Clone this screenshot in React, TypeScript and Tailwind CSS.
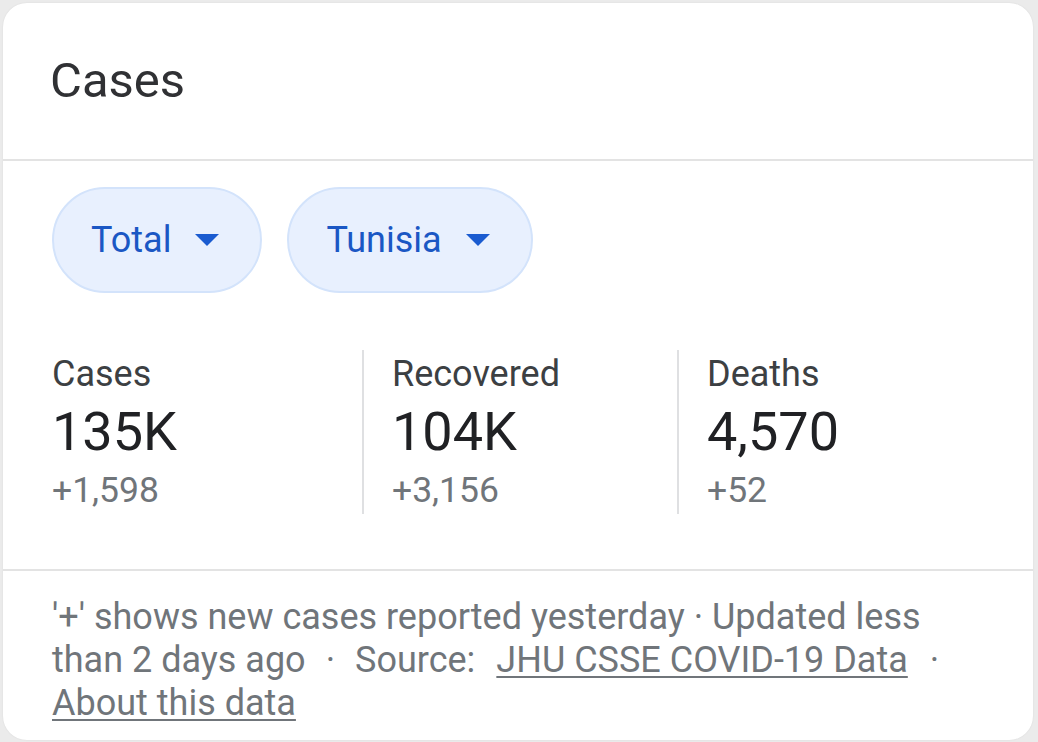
import React from "react";

function Arrow() {
  return (
    <svg width="24" height="12" viewBox="0 0 24 12" className="shrink-0">
      <path d="M0 0H24L12 12Z" fill="#1a5bd0" />
    </svg>
  );
}

function Chip({ label }: { label: string }) {
  return (
    <div className="flex h-[106px] items-center gap-[24px] rounded-full border-2 border-[#d3e3fb] bg-[#e8f0fe] pl-[37px] pr-[41px]">
      <span className="text-[36px] leading-[42px] text-[#1a57c4]">{label}</span>
      <Arrow />
    </div>
  );
}

function Stat({
  label,
  value,
  delta,
  first,
}: {
  label: string;
  value: string;
  delta: string;
  first?: boolean;
}) {
  return (
    <div className={first ? "flex flex-col" : "flex flex-col border-l-2 border-[#dfe0e2] pl-[28px]"}>
      <div className="text-[36px] leading-[48px] text-[#3c4043]">{label}</div>
      <div className="text-[54px] leading-[68px] text-[#202124]">{value}</div>
      <div className="text-[35.5px] leading-[48px] text-[#70757a]">{delta}</div>
    </div>
  );
}

export default function App() {
  return (
    <div
      className="h-[742px] w-[1038px] bg-[#ebebeb] pb-[2px] pl-[3px] pr-[5px] pt-[3px]"
      style={{ fontFamily: "Roboto, 'Liberation Sans', sans-serif" }}
    >
      <div className="flex h-full flex-col overflow-hidden rounded-[24px] bg-white shadow-[0_0_2px_rgba(0,0,0,0.08)]">
        <div className="border-b-2 border-[#e3e3e3] px-[47px] py-[49px]">
          <h1 className="text-[49px] leading-[58px] text-[#303134]">Cases</h1>
        </div>
        <div className="border-b-2 border-[#e3e3e3] px-[49px] pb-[55px] pt-[26px]">
          <div className="flex gap-[25px]">
            <Chip label="Total" />
            <Chip label="Tunisia" />
          </div>
          <div className="mt-[57px] grid grid-cols-[310px_315px_1fr]">
            <Stat label="Cases" value="135K" delta="+1,598" first />
            <Stat label="Recovered" value="104K" delta="+3,156" />
            <Stat label="Deaths" value="4,570" delta="+52" />
          </div>
        </div>
        <div className="px-[49px] pb-[15px] pt-[25px] text-[36px] leading-[43px] text-[#70757a]">
          <p>
            '+' shows new cases reported yesterday · Updated less
            <br />
            than 2 days ago<span className="px-[20px]">·</span>Source:
            <span className="inline-block w-[21px]"></span>
            <a className="underline decoration-[2px] underline-offset-[4px]">JHU CSSE COVID-19 Data</a>
            <span className="pl-[22px]">·</span>
            <br />
            <a className="underline decoration-[2px] underline-offset-[4px]">About this data</a>
          </p>
        </div>
      </div>
    </div>
  );
}
